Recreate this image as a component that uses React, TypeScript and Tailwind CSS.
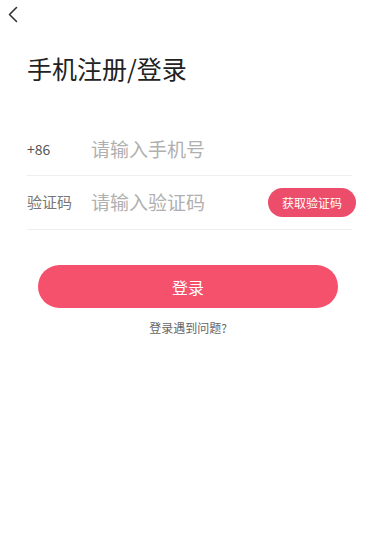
import { useState } from "react";

const font = { fontFamily: '"Noto Sans CJK SC", "Noto Sans", sans-serif' };

export default function App() {
  const [phone, setPhone] = useState("");
  const [code, setCode] = useState("");

  return (
    <div className="min-h-[538px] w-full bg-white" style={font}>
      {/* Back */}
      <button className="block pl-[7px] pt-[6px]" aria-label="返回">
        <svg width="12" height="17" viewBox="0 0 12 17" fill="none">
          <path d="M9.5 1.5L2.5 8.5L9.5 15.5" stroke="#333" strokeWidth="1.6" strokeLinecap="round" strokeLinejoin="round" />
        </svg>
      </button>

      <h1 className="mt-[28px] pl-[27px] text-[25px] leading-[34px] font-normal text-[#222]">
        手机注册/登录
      </h1>

      {/* Form */}
      <div className="mt-[39px] px-[16px] pl-[27px]">
        <div className="flex h-[52px] items-center border-b border-[#eeeeee]">
          <span className="w-[64px] text-[14px] text-[#555]">+86</span>
          <input
            value={phone}
            onChange={(e) => setPhone(e.target.value)}
            placeholder="请输入手机号"
            className="flex-1 bg-transparent text-[19px] text-[#333] outline-none placeholder:text-[#b0b0b0]"
          />
        </div>
        <div className="flex h-[54px] items-center border-b border-[#eeeeee]">
          <span className="w-[64px] text-[15px] text-[#777]">验证码</span>
          <input
            value={code}
            onChange={(e) => setCode(e.target.value)}
            placeholder="请输入验证码"
            className="min-w-0 flex-1 bg-transparent text-[19px] text-[#333] outline-none placeholder:text-[#b0b0b0]"
          />
          <button className="-mr-[4px] h-[29px] w-[88px] rounded-full bg-[#ec4d6a] text-[12px] text-white">
            获取验证码
          </button>
        </div>
      </div>

      <div className="mt-[35px] px-[38px] pr-[30px]">
        <button className="h-[43px] w-full rounded-full bg-[#f5506c] text-[16px] text-white">
          登录
        </button>
        <p className="mt-[11px] text-center text-[12px] text-[#666]">登录遇到问题?</p>
      </div>
    </div>
  );
}
